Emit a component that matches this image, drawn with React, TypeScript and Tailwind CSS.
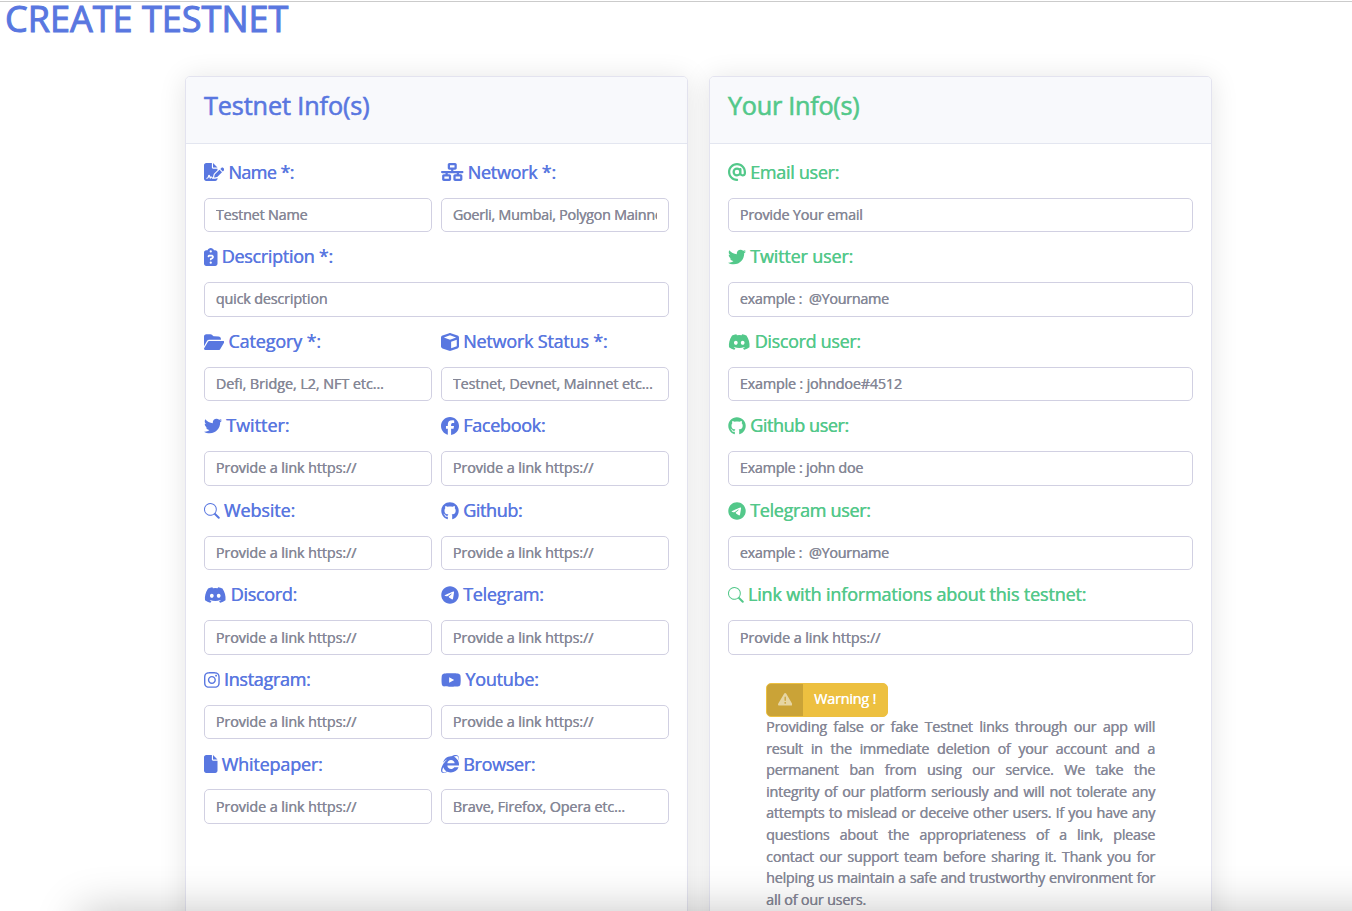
import type { ComponentType, ReactNode } from "react";
import {
  FaAt,
  FaClipboardQuestion,
  FaCube,
  FaDiscord,
  FaFacebook,
  FaFile,
  FaFileSignature,
  FaFolderOpen,
  FaGithub,
  FaInstagram,
  FaInternetExplorer,
  FaNetworkWired,
  FaTelegram,
  FaTriangleExclamation,
  FaTwitter,
  FaYoutube,
} from "react-icons/fa6";
import { BsSearch } from "react-icons/bs";

type Field = {
  label: string;
  icon: ComponentType<{ className?: string }>;
  placeholder: string;
  labelClass: string;
  inputClass: string;
  wide?: boolean;
  iconClass?: string;
};

const LINK = "Provide a link https://";
const LINK_TRACKING = "tracking-[-0.1px]";
const ICON_NARROW = "h-[18px] w-[13.5px]";
const ICON_MEDIUM = "h-[18px] w-[15.75px]";
const ICON_REGULAR = "h-[18px] w-[18px]";
const ICON_WIDE = "h-[18px] w-[20.25px]";
const ICON_WIDEST = "h-[18px] w-[22.5px]";
const ICON_SEARCH = "h-[15.75px] w-[15.75px]";

const testnetFields: Field[] = [
  { label: "Name *:", icon: FaFileSignature, placeholder: "Testnet Name", labelClass: "tracking-[-0.6px]", inputClass: "tracking-[-0.2px]", iconClass: ICON_WIDE },
  { label: "Network *:", icon: FaNetworkWired, placeholder: "Goerli, Mumbai, Polygon Mainnet", labelClass: "tracking-[-0.28px]", inputClass: "tracking-[-0.283px]", iconClass: ICON_WIDEST },
  { label: "Description *:", icon: FaClipboardQuestion, placeholder: "quick description", labelClass: "tracking-[-0.3px]", inputClass: "tracking-[-0.18px]", wide: true, iconClass: ICON_NARROW },
  { label: "Category *:", icon: FaFolderOpen, placeholder: "Defi, Bridge, L2, NFT etc...", labelClass: "tracking-[-0.15px]", inputClass: "tracking-[-0.07px]", iconClass: ICON_WIDE },
  { label: "Network Status *:", icon: FaCube, placeholder: "Testnet, Devnet, Mainnet etc...", labelClass: "tracking-[-0.22px]", inputClass: "tracking-[-0.11px]" },
  { label: "Twitter:", icon: FaTwitter, placeholder: LINK, labelClass: "tracking-[0px]", inputClass: LINK_TRACKING },
  { label: "Facebook:", icon: FaFacebook, placeholder: LINK, labelClass: "tracking-[-0.3px]", inputClass: LINK_TRACKING },
  { label: "Website:", icon: BsSearch, placeholder: LINK, labelClass: "tracking-[-0.1px]", inputClass: LINK_TRACKING, iconClass: ICON_SEARCH },
  { label: "Github:", icon: FaGithub, placeholder: LINK, labelClass: "tracking-[-0.4px]", inputClass: LINK_TRACKING },
  { label: "Discord:", icon: FaDiscord, placeholder: LINK, labelClass: "tracking-[-0.3px]", inputClass: LINK_TRACKING, iconClass: ICON_WIDEST },
  { label: "Telegram:", icon: FaTelegram, placeholder: LINK, labelClass: "tracking-[-0.3px]", inputClass: LINK_TRACKING },
  { label: "Instagram:", icon: FaInstagram, placeholder: LINK, labelClass: "tracking-[-0.3px]", inputClass: LINK_TRACKING, iconClass: ICON_MEDIUM },
  { label: "Youtube:", icon: FaYoutube, placeholder: LINK, labelClass: "tracking-[-0.25px]", inputClass: LINK_TRACKING, iconClass: ICON_WIDE },
  { label: "Whitepaper:", icon: FaFile, placeholder: LINK, labelClass: "tracking-[-0.18px]", inputClass: LINK_TRACKING, iconClass: ICON_NARROW },
  { label: "Browser:", icon: FaInternetExplorer, placeholder: "Brave, Firefox, Opera etc...", labelClass: "tracking-[-0.3px]", inputClass: "tracking-[-0.16px]" },
];

const userFields: Field[] = [
  { label: "Email user:", icon: FaAt, placeholder: "Provide Your email", labelClass: "tracking-[-0.3px]", inputClass: "tracking-[-0.2px]", wide: true },
  { label: "Twitter user:", icon: FaTwitter, placeholder: "example :  @Yourname", labelClass: "tracking-[-0.168px]", inputClass: "tracking-[-0.3px]", wide: true },
  { label: "Discord user:", icon: FaDiscord, placeholder: "Example : johndoe#4512", labelClass: "tracking-[-0.34px]", inputClass: "tracking-[-0.19px]", wide: true, iconClass: ICON_WIDEST },
  { label: "Github user:", icon: FaGithub, placeholder: "Example : john doe", labelClass: "tracking-[-0.42px]", inputClass: "tracking-[-0.25px]", wide: true },
  { label: "Telegram user:", icon: FaTelegram, placeholder: "example :  @Yourname", labelClass: "tracking-[-0.32px]", inputClass: "tracking-[-0.3px]", wide: true },
  { label: "Link with informations about this testnet:", icon: BsSearch, placeholder: LINK, labelClass: "tracking-[-0.165px]", inputClass: LINK_TRACKING, wide: true, iconClass: ICON_SEARCH },
];

const warningLines = [
  "Providing false or fake Testnet links through our app will",
  "result in the immediate deletion of your account and a",
  "permanent ban from using our service. We take the",
  "integrity of our platform seriously and will not tolerate any",
  "attempts to mislead or deceive other users. If you have any",
  "questions about the appropriateness of a link, please",
  "contact our support team before sharing it. Thank you for",
  "helping us maintain a safe and trustworthy environment for",
];

function FormField({ field }: { field: Field }) {
  const Icon = field.icon;
  return (
    <label className={field.wide ? "col-span-2 block h-[84.55px]" : "block h-[84.55px]"}>
      <span className="flex h-[35.9px] items-start">
        <span className="flex h-[21.6px] items-center gap-[4px] whitespace-nowrap text-[18px] leading-[21.6px] [text-shadow:0.4px_0_0_currentColor]">
          <Icon className={`shrink-0 ${field.iconClass ?? ICON_REGULAR}`} />
          <span className={field.labelClass}>{field.label}</span>
        </span>
      </span>
      <input
        placeholder={field.placeholder}
        className={`block h-[34.5px] w-full rounded-[5px] border border-[#d1d0e2] bg-white px-[10.7px] pb-[1px] text-[14.4px] font-medium text-[#858796] outline-none [text-shadow:0.35px_0_0_currentColor] placeholder:text-[#858796] placeholder:opacity-100 ${field.inputClass}`}
      />
    </label>
  );
}

function Card({ title, titleClass, accent, children }: { title: string; titleClass: string; accent: string; children: ReactNode }) {
  return (
    <section className={`h-[900px] w-[503px] rounded-[5px] border border-[#e3e3ef] bg-white shadow-[0_2px_28px_rgba(0,0,0,0.11)] ${accent}`}>
      <header className="h-[67px] rounded-t-[4px] border-b border-[#e3e6f0] bg-[#f8f9fc] px-[18px] pt-[13px]">
        <h2 className={`text-[25.2px] leading-[30px] font-medium [-webkit-text-stroke:0.6px] ${titleClass}`}>{title}</h2>
      </header>
      <div className="px-[18px] pt-[17.7px]">{children}</div>
    </section>
  );
}

export default function App() {
  return (
    <div className="relative h-screen w-full overflow-hidden bg-white pt-px font-['Open_Sans','Noto_Sans',sans-serif] font-medium">
      <div className="h-[75px] border-t border-[#cbcbcb] pl-[5px]">
        <h1 className="text-[36px] leading-[33px] font-medium tracking-[0.02px] text-[#5977e0] [-webkit-text-stroke:1px]">CREATE TESTNET</h1>
      </div>
      <main className="flex gap-[21px] pl-[185px]">
        <Card title="Testnet Info(s)" titleClass="tracking-[-0.1px]" accent="text-[#5977e0]">
          <div className="grid grid-cols-2 gap-x-[9px]">
            {testnetFields.map((f) => (
              <FormField key={f.label} field={f} />
            ))}
          </div>
        </Card>
        <Card title="Your Info(s)" titleClass="tracking-[-0.25px]" accent="text-[#53c88a]">
          <div className="grid grid-cols-2">
            {userFields.map((f) => (
              <FormField key={f.label} field={f} />
            ))}
          </div>
          <div className="mt-[14px] w-[427px] pl-[38px] text-[14.4px] text-[#858796] [text-shadow:0.35px_0_0_currentColor]">
            <button className="flex h-[34px] w-[122px] items-stretch overflow-hidden rounded-[5px] border border-[#edc040] bg-[#edc040] text-white">
              <span className="flex w-[36px] items-center justify-center bg-[#caa337] pb-[2px]">
                <FaTriangleExclamation className="size-[14.4px] text-[#e6d5a2]" />
              </span>
              <span className="pl-[11px] leading-[30px] tracking-[-0.2px] [text-shadow:0.35px_0_0_currentColor]">Warning !</span>
            </button>
            <p className="-mt-[1px] leading-[21.6px]">
              {warningLines.map((line) => (
                <span key={line} className="block text-justify tracking-[-0.26px] [text-align-last:justify]">
                  {line}
                </span>
              ))}
              <span className="block tracking-[-0.22px]">all of our users.</span>
            </p>
          </div>
        </Card>
      </main>
      <div className="pointer-events-none absolute top-full right-[-80px] left-[80px] h-[100px] shadow-[0_0_45px_rgba(0,0,0,0.23)]" />
    </div>
  );
}
